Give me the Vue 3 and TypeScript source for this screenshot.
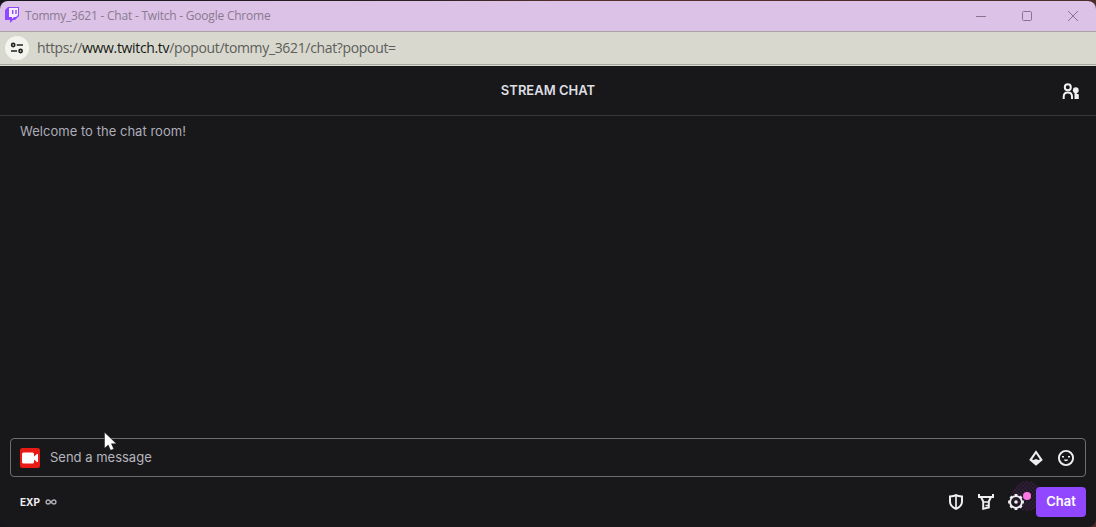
<script setup lang="ts">
import { ref } from 'vue'

const message = ref('')
const account = 'Tommy_3621'
</script>

<template>
  <div class="desktop">
    <div class="window">
      <header class="titlebar">
        <svg class="logo" width="14" height="17" viewBox="0 0 14 17">
          <path fill="#9146ff" d="M3 0h11v9l-4 4H8l-3 3v-3H0V3z" />
          <path fill="#f4edff" d="M4 1h9v7l-2 2H9l-2 2v-2H4z" />
          <path fill="#9146ff" d="M7 3h1.4v4H7zM10.3 3h1.4v4h-1.4z" />
        </svg>
        <span class="title">{{ account }} - Chat - Twitch - Google Chrome</span>
        <div class="controls">
          <svg width="46" height="30" viewBox="0 0 46 30"><path d="M18 15.5h10" /></svg>
          <svg width="46" height="30" viewBox="0 0 46 30"><rect x="18.5" y="10.5" width="9" height="9" rx="1" /></svg>
          <svg width="46" height="30" viewBox="0 0 46 30"><path d="M18 10l10 10M28 10L18 20" /></svg>
        </div>
      </header>

      <div class="address">
        <span class="site">
          <svg width="14" height="12" viewBox="0 0 14 12" fill="none" stroke="#20211f" stroke-width="1.6">
            <circle cx="3.2" cy="3" r="1.6" /><path d="M6.7 3H13M1 9h6" /><circle cx="10.6" cy="9" r="1.6" />
          </svg>
        </span>
        <span class="url">https://<b>www.twitch.tv</b>/popout/tommy_3621/chat?popout=</span>
      </div>

      <main class="chat">
        <div class="chat-head">
          <h1>STREAM CHAT</h1>
          <svg class="community" width="18" height="17" viewBox="0 0 18 17">
            <g fill="none" stroke="#efeff1" stroke-width="2">
              <circle cx="5.8" cy="4.3" r="3" />
              <path d="M1.7 16v-2.2c0-2.700 1.500-4.300 4.100-4.300S10 11.100 10 13.800V16" />
            </g>
            <circle cx="13.8" cy="7.200" r="2.900" fill="#efeff1" />
            <path fill="#efeff1" d="M12.500 9h2.300v2h1.200q.8 0 .8.800V16h-4.300z" />
          </svg>
        </div>

        <div class="messages"><p>Welcome to the chat room!</p></div>

        <label class="composer">
          <svg class="badge" width="20" height="20" viewBox="0 0 20 20">
            <rect width="20" height="20" rx="2.5" fill="#e91916" />
            <path fill="#fff" d="M3.500 4.500h9A1.500 1.500 0 0 1 14 6v2.500L17 6h1v8h-1l-3-2.500V14a1.500 1.500 0 0 1-1.500 1.500h-9A1.500 1.500 0 0 1 2 14V6a1.500 1.500 0 0 1 1.500-1.500z" />
          </svg>
          <input v-model="message" type="text" placeholder="Send a message" />
          <svg class="bits" width="14" height="16" viewBox="0 0 14 16">
            <path fill="#efeff1" fill-rule="evenodd" d="M7 .2l6.800 9.800L7 15.700.2 10zM7 3.700L3.100 9.600l1.300.5L7 8.900l2.600 1.200 1.300-.5z" />
          </svg>
          <svg class="emote" width="18" height="18" viewBox="0 0 18 18">
            <circle cx="9" cy="9" r="7.100" fill="none" stroke="#efeff1" stroke-width="1.900" />
            <path fill="#efeff1" d="M5 7h2v1.500H5zM11 7h2v1.500h-2zM7 10.500h4a2 1.700 0 0 1-4 0z" />
          </svg>
        </label>

        <footer class="actions">
          <strong class="exp">EXP</strong>
          <svg class="infinity" width="12" height="6" viewBox="0 0 12 6" fill="none" stroke="#adadb3" stroke-width="1.4">
            <path d="M6 3C4.800 1.500 4.200 1 3.100 1a2 2 0 0 0 0 4C4.200 5 4.800 4.500 6 3s1.800-2 2.900-2a2 2 0 0 1 0 4C7.800 5 7.200 4.500 6 3z" />
          </svg>
          <svg class="shield" width="14" height="16" viewBox="0 0 14 16" fill="none" stroke="#efeff1">
            <path stroke-width="2" d="M7 1.200c1.500 1 3.500 1.300 6 1.300v5c0 3.500-2.200 5.800-6 7.300-3.800-1.500-6-3.800-6-7.300v-5c2.500 0 4.500-.3 6-1.300z" />
            <path stroke-width="1.700" d="M7 1v13" />
          </svg>
          <svg class="sword" width="16" height="16" viewBox="0 0 16 16" fill="none" stroke="#efeff1" stroke-width="2">
            <path d="M1 0v3h14V0" />
            <path d="M3 3l2.200 4.500v7.200l5.600-1.200v-6L13 3" />
            <path d="M5 8h6M7.500 11.500H11" stroke-width="1.500" />
          </svg>
          <div class="settings">
            <span class="halo"></span>
            <svg width="16" height="16" viewBox="0 0 16 16">
              <circle cx="8" cy="8" r="5.900" fill="none" stroke="#efeff1" stroke-width="1.900" />
              <path stroke="#efeff1" stroke-width="2.800" d="M8 .1v2M8 13.900v2M.1 8h2M13.900 8h2M2.500 2.500l1.500 1.500M12 12l1.500 1.500M2.500 13.500l1.500-1.500M12 4l1.500-1.500" />
              <circle cx="8" cy="8" r="1.800" fill="#efeff1" />
            </svg>
            <span class="dot"></span>
          </div>
          <button type="button">Chat</button>
        </footer>

        <svg class="pointer" width="13" height="19" viewBox="0 0 13 19">
          <path fill="#fff" stroke="#000" stroke-width=".4" d="M.5.3v16l3.700-3.400 2.400 5.400 3.200-1.400-2.400-5.200h5z" />
        </svg>
      </main>
    </div>
  </div>
</template>

<style>
html, body { margin: 0; overflow: hidden; background: #2b1715; }
</style>

<style scoped>
* { box-sizing: border-box; }
svg { display: block; flex: none; }
.desktop { height: 527px; padding-top: 1px; background: linear-gradient(90deg, #17151d 0, #2b2025 38%, #57302b 52%, #4c2b28 100%); }
.window { height: 526px; display: flex; flex-direction: column; overflow: hidden; border-radius: 8px; background: #18181b; }
.titlebar { height: 31px; display: flex; align-items: flex-start; padding-left: 5px; background: #dbc2e6; border-bottom: 1px solid #aaa4a9; }
.logo { margin-top: 6px; }
.title { margin-left: 6px; font: 12px/30px "Open Sans", "Noto Sans", sans-serif; color: #8a7a91; letter-spacing: -0.22px; white-space: nowrap; }
.controls { display: flex; margin-left: auto; }
.controls svg { fill: none; stroke: #86758d; stroke-width: 1; }
.address { height: 34px; display: flex; align-items: center; padding: 0 5px 2px; background: #d8d8cf; border-bottom: 1px solid #d6dccf; box-shadow: inset 0 -1px #a6a8a0; }
.site { width: 24px; height: 24px; border-radius: 50%; background: #f4f4ef; display: grid; place-items: center; }
.url { margin-left: 8px; font: 14px/30px "Open Sans", "Noto Sans", sans-serif; color: #5d5e59; letter-spacing: -0.34px; white-space: nowrap; }
.url b { font-weight: 400; color: #171815; }
.chat { position: relative; flex: 1; display: flex; flex-direction: column; color: #efeff1; font-family: Inter, "Liberation Sans", sans-serif; }
.chat-head { position: relative; height: 50px; display: flex; align-items: center; justify-content: center; padding-bottom: 1px; border-bottom: 1px solid #35353a; }
h1 { margin: 0; font-size: 13px; line-height: 20px; font-weight: 600; color: #dedee3; }
.community { position: absolute; right: 16px; top: 17px; }
.messages { flex: 1; padding: 5px 20px; }
.messages p { margin: 0; font-size: 13px; line-height: 20px; color: #adadb8; letter-spacing: 0.03px; }
.composer { height: 39px; display: flex; align-items: center; margin: 0 10px; padding: 0 10px 0 9px; border: 1px solid #6c6c73; border-radius: 4px; }
input { flex: 1; min-width: 0; height: 30px; margin-left: 10px; padding: 0 0 2px; border: 0; outline: 0; background: transparent; font: 13px/20px Inter, "Liberation Sans", sans-serif; color: #efeff1; }
input::placeholder { color: #b5b5bd; opacity: 1; }
.emote { margin-left: 14px; }
.actions { height: 50px; display: flex; align-items: center; padding: 0 10px 0 20px; }
.exp { font-size: 10px; line-height: 20px; font-weight: 700; }
.infinity { margin: -1px 0 0 5px; }
.shield { margin-left: auto; }
.sword { margin-left: 15px; }
.settings { position: relative; margin: 0 12px 0 14px; }
.settings svg { position: relative; }
.halo { position: absolute; left: 4px; top: -13px; width: 30px; height: 30px; border-radius: 50%; background: repeating-conic-gradient(#321c38 0 25%, #1c1824 0 50%) 0 0 / 4px 4px; }
.dot { position: absolute; left: 15px; top: -2px; width: 8px; height: 8px; border-radius: 50%; background: #ff75e6; }
button { position: relative; width: 50px; height: 30px; padding: 0 0 2px; border: 0; border-radius: 4px; background: #9147ff; color: #fff; font: 600 13px/28px Inter, "Liberation Sans", sans-serif; }
.pointer { position: absolute; left: 104px; top: 366px; }
</style>
